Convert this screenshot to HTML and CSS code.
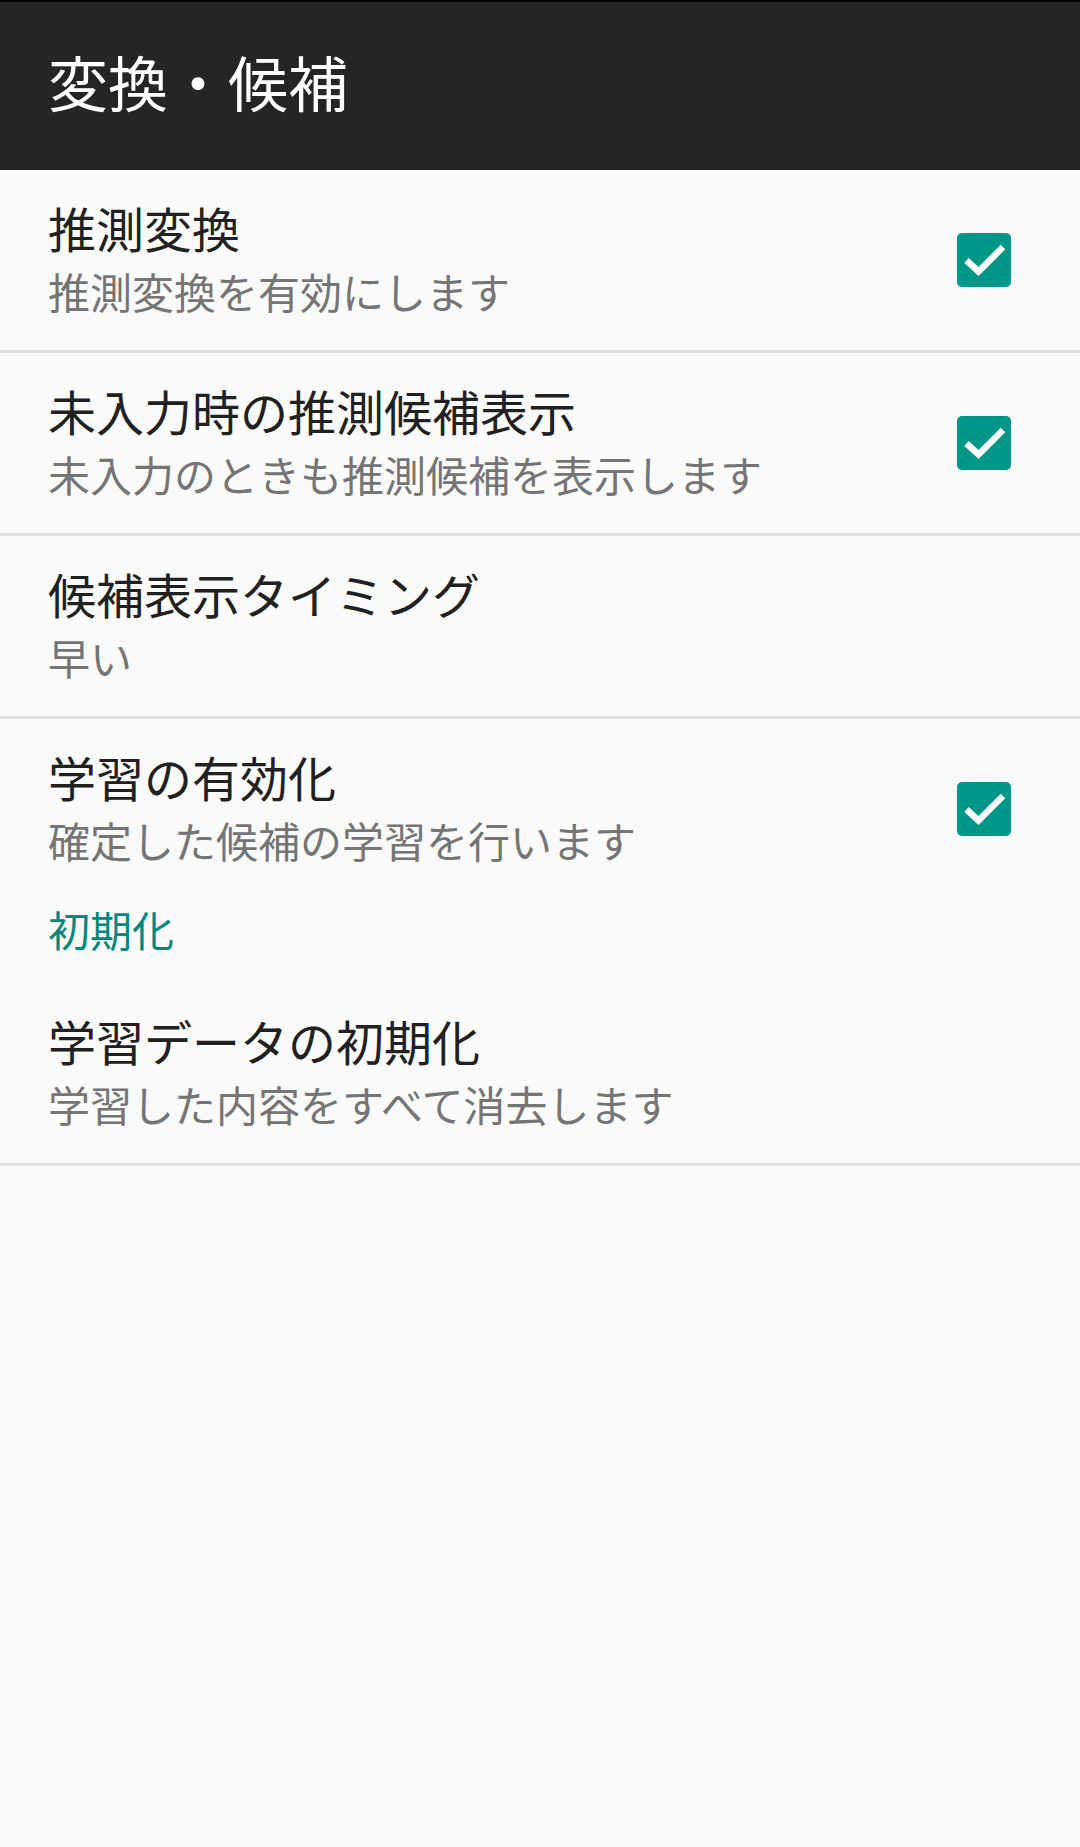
FILE: index.html
```html
<!DOCTYPE html>
<html lang="ja">
<head>
<meta charset="utf-8">
<title>変換・候補</title>
<link rel="stylesheet" href="styles.css">
</head>
<body>
<header class="appbar">
  <h1 class="appbar-title">変換・候補</h1>
</header>
<main class="prefs">
  <div class="pref pref-divided">
    <div class="pref-text">
      <div class="pref-title">推測変換</div>
      <div class="pref-summary">推測変換を有効にします</div>
    </div>
    <span class="checkbox"><svg viewBox="0 0 54 54" width="54" height="54"><path d="M9.5 27.5 L21.5 38.5 L46 14" fill="none" stroke="#fff" stroke-width="6.5"/></svg></span>
  </div>
  <div class="pref pref-divided">
    <div class="pref-text">
      <div class="pref-title">未入力時の推測候補表示</div>
      <div class="pref-summary">未入力のときも推測候補を表示します</div>
    </div>
    <span class="checkbox"><svg viewBox="0 0 54 54" width="54" height="54"><path d="M9.5 27.5 L21.5 38.5 L46 14" fill="none" stroke="#fff" stroke-width="6.5"/></svg></span>
  </div>
  <div class="pref pref-divided">
    <div class="pref-text">
      <div class="pref-title">候補表示タイミング</div>
      <div class="pref-summary">早い</div>
    </div>
  </div>
  <div class="pref">
    <div class="pref-text">
      <div class="pref-title">学習の有効化</div>
      <div class="pref-summary">確定した候補の学習を行います</div>
    </div>
    <span class="checkbox"><svg viewBox="0 0 54 54" width="54" height="54"><path d="M9.5 27.5 L21.5 38.5 L46 14" fill="none" stroke="#fff" stroke-width="6.5"/></svg></span>
  </div>
  <div class="category">初期化</div>
  <div class="pref pref-divided">
    <div class="pref-text">
      <div class="pref-title">学習データの初期化</div>
      <div class="pref-summary">学習した内容をすべて消去します</div>
    </div>
  </div>
</main>
</body>
</html>
```
FILE: styles.css
```css
html, body {
  margin: 0;
  padding: 0;
}
body {
  background: #fafafa;
  width: 1080px;
  min-height: 1847px;
  font-family: "Noto Sans CJK JP", "Noto Sans", Roboto, sans-serif;
  color: #212121;
}
.appbar {
  box-sizing: border-box;
  height: 170px;
  background: #252525;
  border-top: 2px solid #050505;
  padding: 44px 0 0 48px;
}
.appbar-title {
  margin: 0;
  font-size: 60px;
  line-height: 70px;
  font-weight: 400;
  color: #ffffff;
}
.prefs {
  display: flex;
  flex-direction: column;
}
.pref {
  display: flex;
  align-items: center;
  height: 180px;
  padding: 0 69px 0 48px;
}
.pref-divided {
  border-bottom: 3px solid #e0e0e0;
}
.pref-text {
  flex: 1;
  display: flex;
  flex-direction: column;
  margin-bottom: 2px;
}
.pref-title {
  font-size: 48px;
  line-height: 64px;
  color: #212121;
}
.pref-summary {
  font-size: 42px;
  line-height: 64px;
  color: #757575;
}
.checkbox {
  width: 54px;
  height: 54px;
  border-radius: 5px;
  background: #009688;
  display: flex;
}
.checkbox svg {
  display: block;
}
.category {
  height: 84px;
  box-sizing: border-box;
  padding: 2px 0 0 48px;
  font-size: 42px;
  line-height: 56px;
  color: #00897b;
}
```
